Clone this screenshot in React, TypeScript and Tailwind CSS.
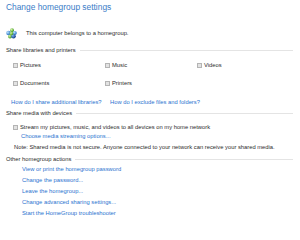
import React from "react";

const Checkbox = () => (
  <span className="inline-block w-[5px] h-[5px] border border-[#b4b4b4] bg-[#e2e2e2] shrink-0" />
);

const HomegroupIcon = () => (
  <svg width="11" height="11" viewBox="0 0 22 22">
    <defs>
      <radialGradient id="gb" cx="35%" cy="35%" r="65%">
        <stop offset="0%" stopColor="#bfe3ff" />
        <stop offset="100%" stopColor="#1f6fc4" />
      </radialGradient>
      <radialGradient id="gg" cx="35%" cy="35%" r="65%">
        <stop offset="0%" stopColor="#d7f5a8" />
        <stop offset="100%" stopColor="#3f9a1e" />
      </radialGradient>
      <radialGradient id="gd" cx="35%" cy="35%" r="65%">
        <stop offset="0%" stopColor="#7fb6f0" />
        <stop offset="100%" stopColor="#123f8c" />
      </radialGradient>
    </defs>
    <circle cx="12" cy="4.5" r="4" fill="url(#gg)" />
    <circle cx="5" cy="10" r="4.5" fill="url(#gb)" />
    <circle cx="17.5" cy="10" r="4" fill="url(#gb)" />
    <circle cx="8" cy="17" r="4" fill="url(#gg)" />
    <circle cx="15" cy="16.5" r="4.5" fill="url(#gd)" />
    <circle cx="11" cy="11" r="3.5" fill="url(#gg)" />
  </svg>
);

const SectionHeader = ({ label, mt }: { label: string; mt: string }) => (
  <div className={`flex items-center h-[8px] leading-[8px] pl-[6px] pr-[7px] text-[#2b2b2b] ${mt}`}>
    <span className="whitespace-nowrap">{label}</span>
    <span className="flex-1 ml-[4px] h-px bg-[#e4e4e4]" />
  </div>
);

const CheckItem = ({ label }: { label: string }) => (
  <div className="flex items-center gap-[2px] h-[8px] leading-[8px]">
    <Checkbox />
    <span>{label}</span>
  </div>
);

export default function App() {
  const actions = [
    "View or print the homegroup password",
    "Change the password...",
    "Leave the homegroup...",
    "Change advanced sharing settings...",
    "Start the HomeGroup troubleshooter",
  ];

  return (
    <div className="w-[300px] h-[240px] bg-white overflow-hidden text-[5.8px] text-[#2b2b2b] font-['Liberation_Sans',Arial,sans-serif]">
      {/* Title */}
      <div className="mt-[2px] h-[10px] leading-[10px] pl-[6px] text-[8.4px] text-[#3a7cc7]">
        Change homegroup settings
      </div>

      {/* Status */}
      <div className="mt-[15px] h-[12px] flex items-center pl-[6px] gap-[9px]">
        <HomegroupIcon />
        <span>This computer belongs to a homegroup.</span>
      </div>

      <SectionHeader label="Share libraries and printers" mt="mt-[7px]" />

      <div className="mt-[7px] pl-[13px] grid grid-cols-[92px_92px_92px] gap-y-[10px]">
        <CheckItem label="Pictures" />
        <CheckItem label="Music" />
        <CheckItem label="Videos" />
        <CheckItem label="Documents" />
        <CheckItem label="Printers" />
      </div>

      <div className="mt-[11px] h-[8px] leading-[8px] flex text-[#2a72cf]">
        <span className="ml-[11px] w-[99px]">How do I share additional libraries?</span>
        <span>How do I exclude files and folders?</span>
      </div>

      <SectionHeader label="Share media with devices" mt="mt-[3px]" />

      <div className="mt-[6px] pl-[13px]">
        <CheckItem label="Stream my pictures, music, and videos to all devices on my home network" />
      </div>
      <div className="mt-[1px] h-[8px] leading-[8px] pl-[21px] text-[#2a72cf]">
        Choose media streaming options...
      </div>
      <div className="mt-[3px] h-[8px] leading-[8px] pl-[14px]">
        Note: Shared media is not secure. Anyone connected to your network can receive your shared media.
      </div>

      <SectionHeader label="Other homegroup actions" mt="mt-[4px]" />

      <div className="mt-[2px] pl-[22px] flex flex-col gap-[3px] text-[#2a72cf]">
        {actions.map((a) => (
          <div key={a} className="h-[8px] leading-[8px]">
            {a}
          </div>
        ))}
      </div>
    </div>
  );
}
